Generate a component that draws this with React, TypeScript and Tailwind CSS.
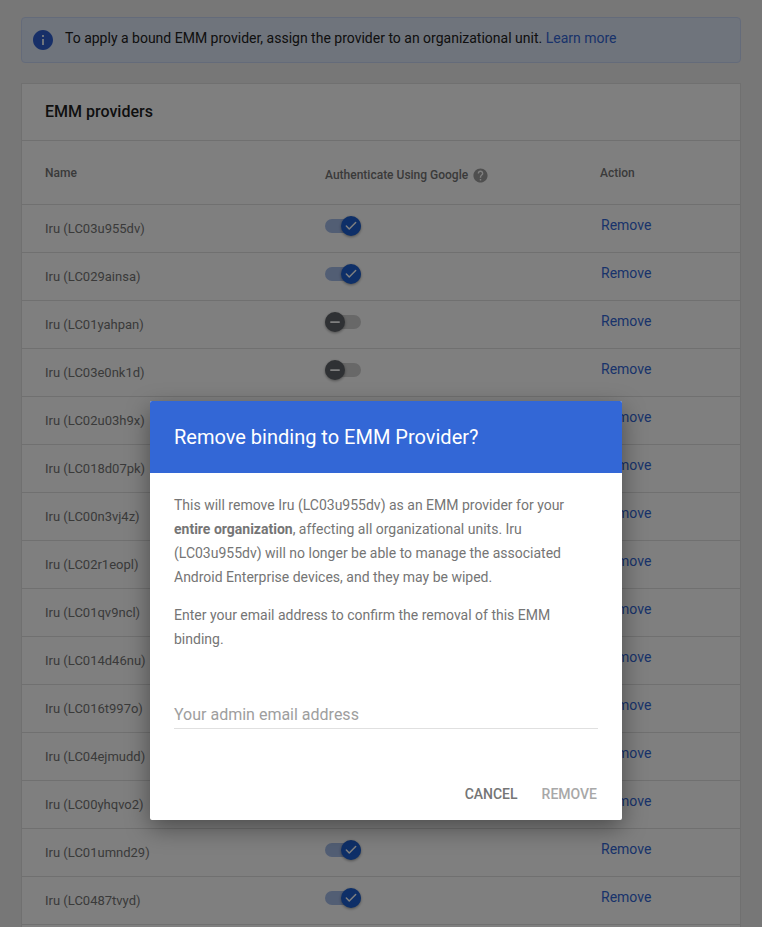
import { Check, Minus } from "lucide-react";

const providers = [
  { id: "LC03u955dv", on: true },
  { id: "LC029ainsa", on: true },
  { id: "LC01yahpan", on: false },
  { id: "LC03e0nk1d", on: false },
  { id: "LC02u03h9x", on: true },
  { id: "LC018d07pk", on: true },
  { id: "LC00n3vj4z", on: true },
  { id: "LC02r1eopl", on: true },
  { id: "LC01qv9ncl", on: true },
  { id: "LC014d46nu", on: true },
  { id: "LC016t997o", on: true },
  { id: "LC04ejmudd", on: true },
  { id: "LC00yhqvo2", on: true },
  { id: "LC01umnd29", on: true },
  { id: "LC0487tvyd", on: true },
];

function Toggle({ on }: { on: boolean }) {
  return (
    <div className="relative h-[14px] w-[36px]">
      <div className={`h-[14px] w-[36px] rounded-full ${on ? "bg-[#a5bce9]" : "bg-[#d0d0d0]"}`} />
      <div
        className={`absolute top-[-3px] flex h-5 w-5 items-center justify-center rounded-full shadow-[0_1px_3px_rgba(0,0,0,0.4)] ${
          on ? "right-0 bg-[#1c5fd0]" : "left-0 bg-[#5f6368]"
        }`}
      >
        {on ? (
          <Check className="h-[14px] w-[14px] text-white" strokeWidth={2.5} />
        ) : (
          <Minus className="h-[14px] w-[14px] text-white" strokeWidth={3} />
        )}
      </div>
    </div>
  );
}

export default function App() {
  return (
    <div className="relative h-[927px] w-[762px] overflow-hidden bg-[#eeeeee] font-['Roboto',sans-serif]">
      <div className="px-[21px] pt-[17px]">
        {/* Info banner */}
        <div className="flex h-[46px] items-center rounded-[4px] border border-[#c9d7f5] bg-[#dfe8f8] pl-[9px]">
          <svg viewBox="0 0 24 24" className="h-6 w-6 fill-[#2f5fd0]">
            <path d="M12 2C6.48 2 2 6.48 2 12s4.48 10 10 10 10-4.48 10-10S17.52 2 12 2zm1 15h-2v-6h2v6zm0-8h-2V7h2v2z" />
          </svg>
          <p className="ml-[10px] mt-[-3px] text-[14px] text-[#212121]">
            To apply a bound EMM provider, assign the provider to an organizational unit.{" "}
            <span className="text-[#3367d6]">Learn more</span>
          </p>
        </div>

        {/* Providers card */}
        <div className="mt-[20px] border border-[#e0e0e0] bg-white">
          <div className="flex h-[57px] items-center border-b border-[#e0e0e0] pl-[23px]">
            <h2 className="text-[16px] font-medium text-[#1f1f1f]">EMM providers</h2>
          </div>
          <div className="grid h-[64px] grid-cols-[280px_276px_1fr] items-center border-b border-[#e0e0e0] pl-[23px] text-[12px] font-medium text-[#757575]">
            <div className="mt-[1px]">Name</div>
            <div className="mt-[5px] flex items-center gap-[4px]">
              <span>Authenticate Using Google</span>
              <svg viewBox="0 0 24 24" className="h-[17px] w-[17px] fill-[#9e9e9e]">
                <path d="M12 2C6.48 2 2 6.48 2 12s4.48 10 10 10 10-4.48 10-10S17.52 2 12 2zm1 17h-2v-2h2v2zm2.07-7.75l-.9.92C13.45 12.9 13 13.5 13 15h-2v-.5c0-1.1.45-2.1 1.17-2.83l1.24-1.26c.37-.36.59-.86.59-1.41 0-1.1-.9-2-2-2s-2 .9-2 2H8c0-2.21 1.79-4 4-4s4 1.79 4 4c0 .88-.36 1.68-.93 2.25z" />
              </svg>
            </div>
            <div className="ml-[-1px] mt-[1px]">Action</div>
          </div>
          {providers.map((p) => (
            <div
              key={p.id}
              className="grid h-[48px] grid-cols-[280px_276px_1fr] items-center border-b border-[#e0e0e0] pl-[23px] text-[13px]"
            >
              <div className="mt-[1px] text-[#757575]">Iru ({p.id})</div>
              <div className="mt-[-6px]">
                <Toggle on={p.on} />
              </div>
              <div className="mt-[-7px] text-[14px] text-[#3367d6]">Remove</div>
            </div>
          ))}
          <div className="h-[48px]" />
        </div>
      </div>

      {/* Scrim */}
      <div className="absolute inset-0 bg-black/50" />

      {/* Dialog */}
      <div className="absolute left-[150px] top-[401px] h-[419px] w-[472px] rounded-[2px] bg-white shadow-[0_8px_24px_rgba(0,0,0,0.4)]">
        <div className="flex h-[72px] items-center rounded-t-[2px] bg-[#3367d6] px-6">
          <h1 className="text-[20px] text-white">Remove binding to EMM Provider?</h1>
        </div>
        <div className="px-6 pt-5 text-[14px] leading-6 text-[#757575]">
          <p>
            This will remove Iru (LC03u955dv) as an EMM provider for your <b className="font-bold">entire organization</b>,
            affecting all organizational units. Iru (LC03u955dv) will no longer be able to manage the associated Android
            Enterprise devices, and they may be wiped.
          </p>
          <p className="mt-[14px]">Enter your email address to confirm the removal of this EMM binding.</p>
          <div className="mt-[40px] h-[38px] border-b border-[#e0e0e0] pt-[12px] text-[16px] text-[#9e9e9e]">
            Your admin email address
          </div>
        </div>
        <div className="mt-[55px] flex justify-end gap-6 pr-[25px] text-[14px] font-medium">
          <span className="text-[#757575]">CANCEL</span>
          <span className="text-[#a8a8a8]">REMOVE</span>
        </div>
      </div>
    </div>
  );
}
